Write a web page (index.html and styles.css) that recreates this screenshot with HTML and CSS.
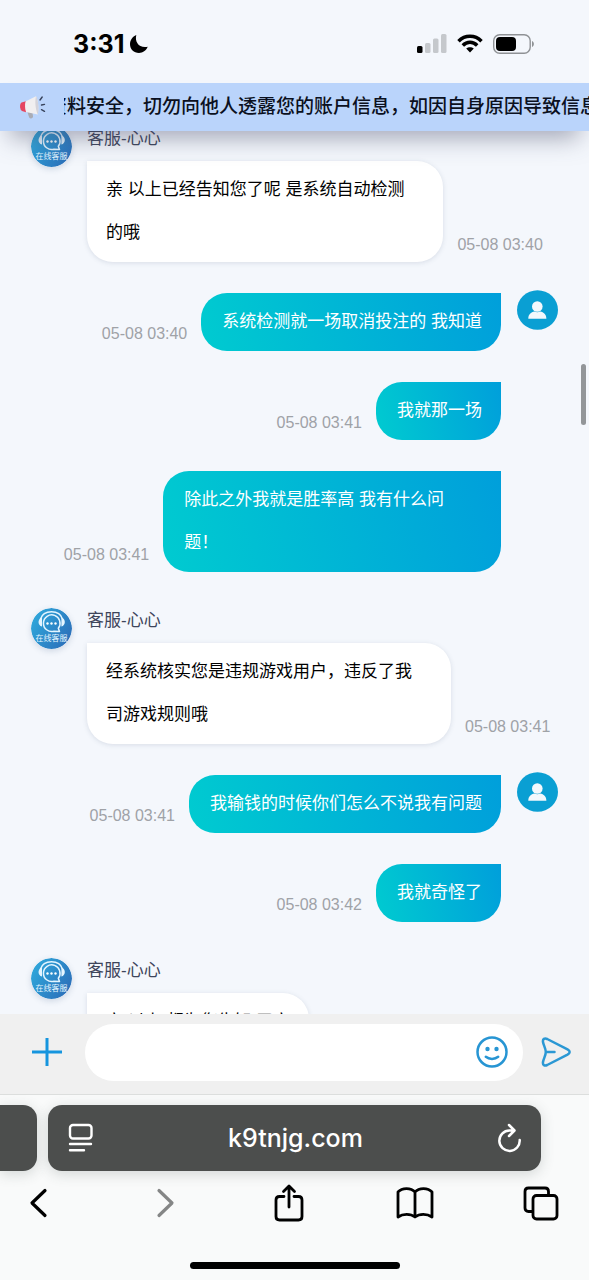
FILE: index.html
```html
<!DOCTYPE html>
<html lang="zh-CN">
<head>
<meta charset="utf-8">
<meta name="viewport" content="width=device-width, initial-scale=1">
<title>在线客服</title>
<link rel="stylesheet" href="styles.css">
</head>
<body>
<svg class="defs" width="0" height="0" aria-hidden="true">
  <defs>
    <linearGradient id="agent-bg" x1="0" y1="0.2" x2="1" y2="0.8">
      <stop offset="0" stop-color="#2fa9dc"/>
      <stop offset="1" stop-color="#2c6db8"/>
    </linearGradient>
    <symbol id="agent" viewBox="0 0 41 41">
      <circle cx="20.500" cy="20.500" r="20.500" fill="url(#agent-bg)"/>
      <g fill="none" stroke="#e4f5ff" stroke-width="1.500" stroke-linecap="round" stroke-linejoin="round">
        <path d="M9.500 11C11 6 15.300 3.700 20.500 3.700S30 6 31.500 11"/>
        <path d="M27.300 20.300A8.300 8.300 0 1 0 23 23.200l5.500.3z"/>
      </g>
      <path d="M11 9.800v8.700c-4.600-.8-4.600-7.900 0-8.700zM30.400 9.800v8.700c4.600-.8 4.600-7.900 0-8.700z" fill="#e4f5ff"/>
      <g fill="#fff"><circle cx="16.500" cy="15.500" r="1.200"/><circle cx="20.500" cy="15.500" r="1.200"/><circle cx="24.500" cy="15.500" r="1.200"/></g>
      <text x="20.500" y="33" text-anchor="middle" class="agent-label">在线客服</text>
    </symbol>
    <symbol id="user" viewBox="0 0 41 40">
      <ellipse cx="20.500" cy="20" rx="20.500" ry="19.700" fill="#0a9fd3"/>
      <circle cx="20.300" cy="16.500" r="5.300" fill="#f3f8fc"/>
      <path d="M11.300 28.700c0-4.500 2.700-6.400 6.200-7.200 1.800.9 3.900.9 5.700 0 3.500.8 6.200 2.700 6.200 7.200z" fill="#f3f8fc"/>
    </symbol>
  </defs>
</svg>
<div class="screen">
  <header class="status">
    <div class="clock">
      <span>3:31</span>
      <svg width="20" height="20" viewBox="0 0 20 20"><path d="M7.300 1C5.500 8 10 14.500 18.700 12.800 17 16.800 13.700 19 10 19 4.800 19 1 15.200 1 10.300 1 6 3.500 2.600 7.300 1z" fill="#000"/></svg>
    </div>
    <div class="signals">
      <svg width="30" height="19" viewBox="0 0 30 19"><rect x="0" y="12" width="5.500" height="7" rx="1.500" fill="#000"/><g fill="#c5c8cc"><rect x="8" y="9" width="5.500" height="10" rx="1.500"/><rect x="16" y="4.500" width="5.500" height="14.500" rx="1.500"/><rect x="24" y="0" width="5.500" height="19" rx="1.500"/></g></svg>
      <svg width="26" height="19" viewBox="0 0 26 19"><g fill="none" stroke="#000" stroke-width="3.500"><path d="M1.500 7.200C8 .6 18 .6 24.500 7.200"/><path d="M5.800 11.500c4.200-4.200 10.200-4.200 14.400 0"/></g><path d="M13 18.500l-3.800-3.900c2.200-1.900 5.400-1.900 7.600 0z" fill="#000"/></svg>
      <svg width="42" height="20" viewBox="0 0 42 20"><rect x=".7" y=".8" width="36.500" height="18.400" rx="6" fill="none" stroke="#8f9295" stroke-width="1.400"/><rect x="3" y="3" width="20" height="14" rx="4" fill="#000"/><path d="M39 7c2.500.8 2.500 5.200 0 6z" fill="#8f9295"/></svg>
    </div>
  </header>

  <section class="notice">
    <svg width="28" height="26" viewBox="0 0 28 26">
      <path d="M8 17l2.200 6.500c1 1.800 4.300.8 3.800-1.200l-.6-4z" fill="#a9acb5"/>
      <path d="M2.500 8.500L7 7.200v11L3 17C.6 15.500.4 9.800 2.500 8.500z" fill="#e54560"/>
      <path d="M6.500 7.500L17 2.200c2 3.600 3 11.500 1.800 18.200L7 17.900C5.900 15.300 5.700 10.500 6.500 7.500z" fill="#f1eff0"/>
      <path d="M17 2.200c2.400 4.500 3.300 12.800 1.800 18.200-2-4-3.300-12.500-1.800-18.200z" fill="#d4d3da"/>
      <path d="M21 6l2.200-3M22.500 11l3-.6M22.500 15.700l3 1.600" stroke="#38435c" stroke-width="1.400" stroke-linecap="round"/>
    </svg>
    <div class="ticker"><span>资料安全，切勿向他人透露您的账户信息，如因自身原因导致信息</span></div>
  </section>

  <main class="chat">
    <div class="messages">
      <article class="row agent">
        <svg class="avatar" width="41" height="41"><use href="#agent"/></svg>
        <div class="body">
          <div class="name">客服-心心</div>
          <div class="line"><p class="bubble wrapped">亲 以上已经告知您了呢 是系统自动检测<br>的哦</p><time>05-08 03:40</time></div>
        </div>
      </article>
      <article class="row user">
        <time>05-08 03:40</time><p class="bubble">系统检测就一场取消投注的 我知道</p>
        <div class="slot"><svg class="avatar" width="41" height="40"><use href="#user"/></svg></div>
      </article>
      <article class="row user">
        <time>05-08 03:41</time><p class="bubble">我就那一场</p><div class="slot"></div>
      </article>
      <article class="row user">
        <time>05-08 03:41</time><p class="bubble wrapped">除此之外我就是胜率高 我有什么问<br>题！</p><div class="slot"></div>
      </article>
      <article class="row agent">
        <svg class="avatar" width="41" height="41"><use href="#agent"/></svg>
        <div class="body">
          <div class="name">客服-心心</div>
          <div class="line"><p class="bubble wrapped">经系统核实您是违规游戏用户，违反了我<br>司游戏规则哦</p><time>05-08 03:41</time></div>
        </div>
      </article>
      <article class="row user">
        <time>05-08 03:41</time><p class="bubble">我输钱的时候你们怎么不说我有问题</p>
        <div class="slot"><svg class="avatar" width="41" height="40"><use href="#user"/></svg></div>
      </article>
      <article class="row user">
        <time>05-08 03:42</time><p class="bubble">我就奇怪了</p><div class="slot"></div>
      </article>
      <article class="row agent">
        <svg class="avatar" width="41" height="41"><use href="#agent"/></svg>
        <div class="body">
          <div class="name">客服-心心</div>
          <div class="line"><p class="bubble">亲 以上 都为您告知 了亲</p></div>
        </div>
      </article>
    </div>
    <div class="thumb"></div>
  </main>

  <form class="composer">
    <button type="button" aria-label="添加"><svg width="30" height="30" viewBox="0 0 30 30"><path d="M15 1v28M0 15h30" stroke="#1695de" stroke-width="3"/></svg></button>
    <div class="field">
      <input type="text" aria-label="消息">
      <button type="button" aria-label="表情"><svg width="32" height="32" viewBox="0 0 32 32"><g fill="none" stroke="#2795d3" stroke-width="2.500" stroke-linecap="round"><circle cx="16" cy="16" r="14.500"/><path d="M9.800 20.800c3.300 2.800 9.100 2.800 12.400 0"/></g><g fill="#2795d3"><circle cx="11.500" cy="13" r="2.200"/><circle cx="20.500" cy="13" r="2.200"/></g></svg></button>
    </div>
    <button type="submit" aria-label="发送"><svg width="30" height="30" viewBox="0 0 30 30"><path d="M2 5C1.500 1.900 3.600.8 6.200 2L26.500 12.300c2.900 1.600 2.900 3.700 0 5.300L6.200 28c-2.600 1.200-4.700.1-4.200-3 .6-3.600 2.800-6.500 2.800-10S2.600 8.600 2 5zM4.800 14.900h8.700" fill="none" stroke="#2b98d4" stroke-width="2.500" stroke-linecap="round" stroke-linejoin="round"/></svg></button>
  </form>

  <footer class="browser">
    <div class="tabs">
      <div class="tab previous"></div>
      <div class="tab address">
        <button type="button" aria-label="页面选项"><svg width="26" height="30" viewBox="0 0 26 30"><g fill="none" stroke="#fff" stroke-width="2.400" stroke-linecap="round"><rect x="2" y="2" width="21.500" height="13.500" rx="3"/><path d="M2 21h21M2 27.300h14"/></g></svg></button>
        <a href="#">k9tnjg.com</a>
        <button type="button" aria-label="重新载入"><svg width="26" height="30" viewBox="0 0 26 30"><path d="M17 7.500h-4.500A10.200 10.200 0 1 0 22.700 17M12 2l5.500 5.500L12 13" fill="none" stroke="#fff" stroke-width="2.500" stroke-linecap="round" stroke-linejoin="round"/></svg></button>
      </div>
      <div class="tab next"></div>
    </div>
    <nav class="toolbar">
      <button type="button" aria-label="后退"><svg width="36" height="38" viewBox="0 0 36 38"><path d="M24 6.500L11 19l13 12.500" fill="none" stroke="#000" stroke-width="3.200" stroke-linecap="round" stroke-linejoin="round"/></svg></button>
      <button type="button" aria-label="前进" disabled><svg width="36" height="38" viewBox="0 0 36 38"><path d="M13 6.500L26 19 13 31.500" fill="none" stroke="#858686" stroke-width="3.200" stroke-linecap="round" stroke-linejoin="round"/></svg></button>
      <button type="button" aria-label="共享"><svg width="36" height="38" viewBox="0 0 36 38"><path d="M13 12.500H8.500Q5 12.500 5 16v16.500Q5 36 8.500 36h19q3.500 0 3.500-3.500V16q0-3.500-3.500-3.500H23M18 23V2.500M12.500 7.500L18 2l5.500 5.500" fill="none" stroke="#000" stroke-width="2.800" stroke-linecap="round" stroke-linejoin="round"/></svg></button>
      <button type="button" aria-label="书签"><svg width="38" height="38" viewBox="0 0 38 38"><path d="M19 8C15 3.500 6 3.500 2 8v25c5-3.500 12.500-3.500 17 0 4.500-3.500 12-3.500 17 0V8c-4-4.500-13-4.500-17 0zM19 8v25" fill="none" stroke="#000" stroke-width="2.800" stroke-linejoin="round"/></svg></button>
      <button type="button" aria-label="标签页"><svg width="36" height="38" viewBox="0 0 36 38"><g fill="none" stroke="#000" stroke-width="2.800"><rect x="10" y="11.500" width="24" height="23.500" rx="3.500"/><path d="M10 27.500H5.500Q2 27.500 2 24V7.500Q2 4 5.500 4H22q3.500 0 3.500 3.500v4"/></g></svg></button>
    </nav>
    <div class="home"></div>
  </footer>
</div>
</body>
</html>
```
FILE: styles.css
```css
* {
  box-sizing: border-box;
}

body {
  margin: 0;
  background: #f4f7fc;
  color: #000;
  font-family: "Liberation Sans", "Noto Sans CJK SC", sans-serif;
}

svg {
  display: block;
  flex: none;
}

button {
  display: block;
  flex: none;
  margin: 0;
  padding: 0;
  border: 0;
  background: none;
}

.defs {
  position: absolute;
}

.screen {
  display: flex;
  flex-direction: column;
  height: 100vh;
  overflow: hidden;
}

.status {
  display: flex;
  flex: none;
  align-items: center;
  justify-content: space-between;
  height: 83px;
  padding: 4px 54px 0 73px;
}

.clock {
  display: flex;
  align-items: center;
  gap: 5px;
  font: 700 25px/30px Inter, sans-serif;
}

.signals {
  display: flex;
  align-items: center;
  gap: 10px;
}

.notice {
  position: relative;
  z-index: 1;
  display: flex;
  flex: none;
  align-items: center;
  gap: 17px;
  height: 48px;
  padding-left: 19px;
  background: #bad4fb;
  box-shadow: 0 16px 24px -10px rgba(70, 76, 105, 0.5);
}

.ticker {
  display: flex;
  flex: 1;
  justify-content: flex-start;
  min-width: 0;
  padding-bottom: 5px;
  overflow: hidden;
  color: #0b1020;
  font: 500 19px/28px "Noto Sans CJK SC", sans-serif;
  white-space: nowrap;
}

.ticker span {
  margin-left: -16px;
}

.chat {
  position: relative;
  flex: 1;
  min-height: 0;
  overflow: hidden;
}

.messages {
  display: flex;
  flex-direction: column;
  gap: 31px;
  margin-top: -10px;
  padding: 0 31px;
}

.row {
  display: flex;
}

.agent {
  gap: 15px;
}

.agent .avatar {
  margin-top: 5px;
  border-radius: 50%;
  box-shadow: 0 2px 6px rgba(60, 90, 130, 0.2);
}

.agent-label {
  fill: #e4f5ff;
  font: 8px "Noto Sans CJK SC", sans-serif;
}

.name {
  height: 40px;
  color: #3e455b;
  font-size: 17px;
  line-height: 36px;
}

.line {
  display: flex;
  align-items: flex-end;
  gap: 14px;
}

.bubble {
  margin: 0;
  padding: 7px 19px 8px;
  font-size: 17px;
  line-height: 43px;
  white-space: nowrap;
}

.agent .bubble {
  border-radius: 0 26px 26px 26px;
  background: #fff;
  box-shadow: 0 1px 5px rgba(70, 90, 120, 0.16);
}

.agent .wrapped {
  padding-right: 39px;
}

.user {
  align-items: flex-end;
  justify-content: flex-end;
}

.user .bubble {
  margin-left: 14px;
  padding-left: 21px;
  border-radius: 26px 0 26px 26px;
  background: linear-gradient(75deg, #00cbd0, #009fdb);
  color: #fff;
}

.user .wrapped {
  padding-right: 57px;
}

.slot {
  align-self: flex-start;
  width: 57px;
  padding-left: 16px;
}

.slot .avatar {
  margin-top: -3px;
}

time {
  padding-bottom: 8px;
  color: #9fa2a7;
  font-size: 16px;
  line-height: 18px;
}

.thumb {
  position: absolute;
  top: 233px;
  right: 3px;
  width: 5px;
  height: 61px;
  border-radius: 3px;
  background: #939699;
}

.composer {
  display: flex;
  flex: none;
  align-items: center;
  height: 80px;
  padding: 0 18px 4px 32px;
  background: #f0f0f0;
}

.field {
  display: flex;
  flex: 1;
  align-items: center;
  height: 57px;
  margin: 0 18px 0 23px;
  padding: 0 15px 0 20px;
  border-radius: 29px;
  background: #fff;
}

.field input {
  flex: 1;
  min-width: 0;
  border: 0;
  outline: 0;
  background: none;
  font: inherit;
  font-size: 17px;
}

.browser {
  display: flex;
  flex: none;
  flex-direction: column;
  align-items: center;
  height: 186px;
  padding-top: 10px;
  border-top: 1px solid #dcdedd;
  background: #f9fafa;
  overflow: hidden;
}

.tabs {
  display: flex;
  align-self: stretch;
  gap: 11px;
}

.tab {
  height: 66px;
  border-radius: 14px;
  background: #4c4e4d;
  box-shadow: 0 3px 14px rgba(60, 75, 70, 0.2);
}

.previous {
  width: 37px;
  border-radius: 0 14px 14px 0;
}

.next {
  width: 37px;
  visibility: hidden;
}

.address {
  display: flex;
  flex: 1;
  align-items: center;
  justify-content: space-between;
  padding: 0 18px 0 20px;
}

.address a {
  color: #fff;
  font: 500 25px/32px Inter, sans-serif;
  text-decoration: none;
}

.toolbar {
  display: flex;
  align-self: stretch;
  justify-content: space-between;
  margin-top: 13px;
  padding: 0 30px 0 21px;
}

.home {
  width: 210px;
  height: 7px;
  margin-top: 40px;
  border-radius: 4px;
  background: #000;
}
```
